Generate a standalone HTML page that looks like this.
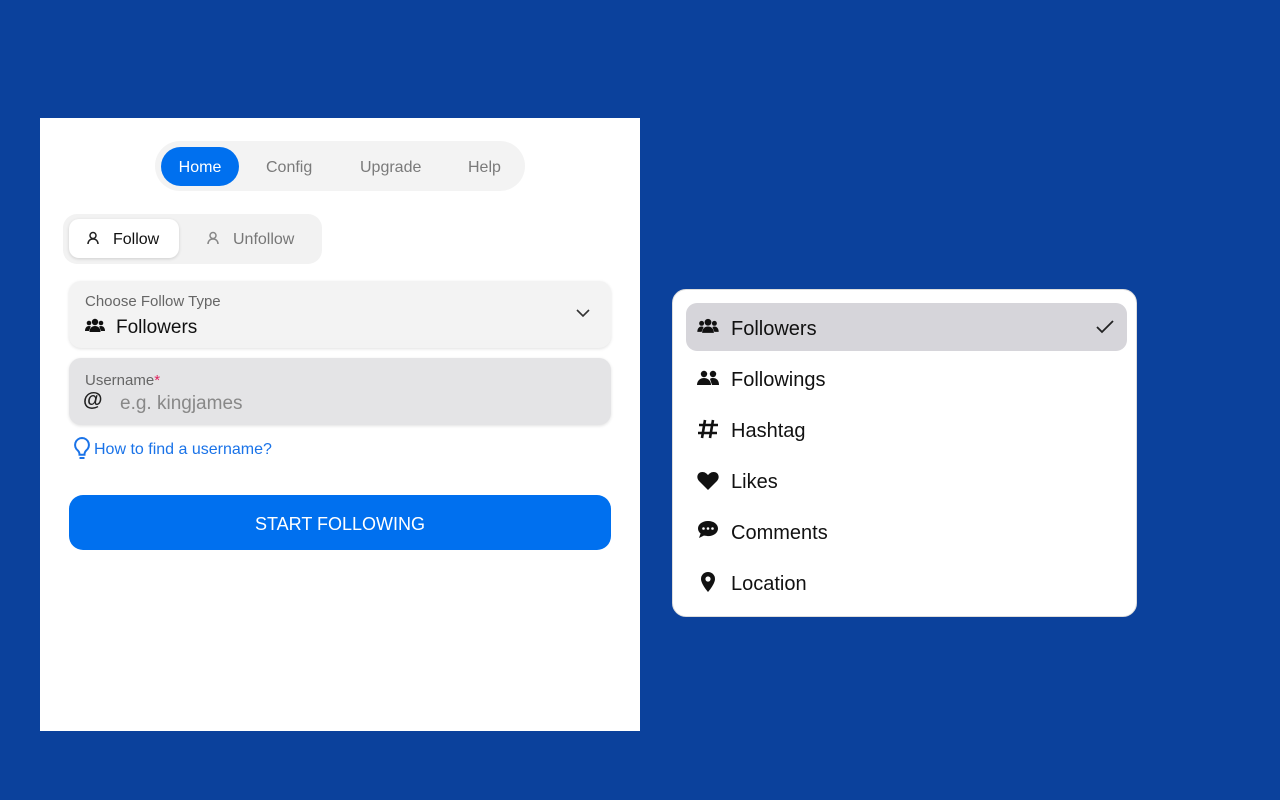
<!DOCTYPE html><html><head><style>
*{box-sizing:border-box;margin:0;padding:0}
body{width:1280px;height:800px;background:#0b419c;font-family:"Liberation Sans",sans-serif;position:relative;overflow:hidden}
.a{position:absolute}
.panel{left:40px;top:118px;width:600px;height:613px;background:#fff}
.nav{left:155px;top:141px;width:370px;height:50px;background:#f3f3f3;border-radius:25px}
.nav span{position:absolute;top:18px;font-size:16px;color:#7a7a7a}
.home{left:161px;top:147px;width:78px;height:39px;background:#0070ef;border-radius:20px;color:#fff;font-size:16px;text-align:center;line-height:41px}
.tabs{left:63px;top:214px;width:259px;height:50px;background:#f2f2f2;border-radius:14px}
.fol{left:69px;top:219px;width:110px;height:39px;background:#fff;border-radius:10px;box-shadow:0 1px 3px rgba(0,0,0,.15)}
.field{left:69px;width:542px;border-radius:12px;box-shadow:0 1px 3px rgba(0,0,0,.12)}
.dd{left:672px;top:289px;width:465px;height:328px;background:#fff;border-radius:14px;border:1px solid #ddd}
.item{position:absolute;left:686px;width:441px;height:48px;font-size:20px;color:#111}
.item svg{position:absolute;left:11px;top:14px}
.item span{position:absolute;left:45px;top:15px}
</style></head><body>
<div class="a panel"></div>
<div class="a nav"><span style="left:111px">Config</span><span style="left:205px">Upgrade</span><span style="left:313px">Help</span></div>
<div class="a home">Home</div>
<div class="a tabs"></div>
<div class="a fol"></div>
<svg class="a" style="left:87px;top:231px" width="14" height="14" viewBox="0 0 14 14" fill="none" stroke="#222" stroke-width="1.5"><circle cx="6" cy="4.5" r="3"/><path d="M1 13c0-3 2-5 5-5s5 2 5 5"/></svg>
<div class="a" style="left:113px;top:231px;font-size:16px;color:#111">Follow</div>
<svg class="a" style="left:207px;top:231px" width="14" height="14" viewBox="0 0 14 14" fill="none" stroke="#888" stroke-width="1.5"><circle cx="6" cy="4.5" r="3"/><path d="M1 13c0-3 2-5 5-5s5 2 5 5"/></svg>
<div class="a" style="left:233px;top:231px;font-size:16px;color:#777">Unfollow</div>
<div class="a field" style="top:281px;height:67px;background:#f3f3f3"></div>
<div class="a" style="left:85px;top:293px;font-size:15px;color:#666">Choose Follow Type</div>
<svg class="a" style="left:85px;top:318px" width="20" height="15" viewBox="0 0 20 15" fill="#111"><circle cx="10" cy="4" r="3.2"/><circle cx="4" cy="5" r="2.3"/><circle cx="16" cy="5" r="2.3"/><path d="M4.5 14c0-4 2.5-6 5.5-6s5.5 2 5.5 6z"/><path d="M0 13c0-3 1.5-5 4-5 1 0 1.8.5 1.8.5L4 13z"/><path d="M20 13c0-3-1.5-5-4-5-1 0-1.8.5-1.8.5L16 13z"/></svg>
<div class="a" style="left:116px;top:317px;font-size:19px;color:#111">Followers</div>
<svg class="a" style="left:576px;top:308px" width="14" height="10" viewBox="0 0 14 10" fill="none" stroke="#333" stroke-width="1.6"><path d="M1 2l6 6 6-6"/></svg>
<div class="a field" style="top:358px;height:67px;background:#e4e4e6"></div>
<div class="a" style="left:85px;top:372px;font-size:15px;color:#666">Username<span style="color:#e0245e">*</span></div>
<div class="a" style="left:83px;top:389px;font-size:20px;font-weight:bold;color:#222">@</div>
<div class="a" style="left:120px;top:393px;font-size:19px;color:#888">e.g. kingjames</div>
<svg class="a" style="left:72px;top:436px" width="20" height="26" viewBox="0 0 20 26" fill="none" stroke="#1a73e8" stroke-width="2"><path d="M10 2a7 7 0 0 0-4 12.7c1 1 1.5 2.3 1.5 4h5c0-1.7.5-3 1.5-4A7 7 0 0 0 10 2z"/><path d="M7.5 22h5"/></svg>
<div class="a" style="left:94px;top:441px;font-size:16px;color:#1a73e8">How to find a username?</div>
<div class="a" style="left:69px;top:495px;width:542px;height:55px;background:#0070ef;border-radius:14px;color:#fff;font-size:18px;text-align:center;line-height:58px">START FOLLOWING</div>

<div class="a dd"></div>
<div class="item" style="top:303px;background:#d6d5da;border-radius:11px"><svg width="22" height="16" viewBox="0 0 20 15" fill="#111" style="top:15px"><circle cx="10" cy="4" r="3.2"/><circle cx="4" cy="5" r="2.3"/><circle cx="16" cy="5" r="2.3"/><path d="M4.5 14c0-4 2.5-6 5.5-6s5.5 2 5.5 6z"/><path d="M0 13c0-3 1.5-5 4-5 1 0 1.8.5 1.8.5L4 13z"/><path d="M20 13c0-3-1.5-5-4-5-1 0-1.8.5-1.8.5L16 13z"/></svg><span>Followers</span><svg width="18" height="14" viewBox="0 0 18 14" fill="none" stroke="#222" stroke-width="1.8" style="left:410px;top:17px"><path d="M1 7l5 5L17 1"/></svg></div>
<div class="item" style="top:354px"><svg width="22" height="16" viewBox="0 0 22 16" fill="#111" style="top:16px"><circle cx="7" cy="4" r="3.2"/><circle cx="16" cy="4" r="3.2"/><path d="M0 15c0-4 3-7 7-7s7 3 7 7z"/><path d="M13 9c1-1 2-1 3-1 4 0 6 3 6 7h-7z"/></svg><span>Followings</span></div>
<div class="item" style="top:405px"><svg width="22" height="20" viewBox="0 0 22 20" fill="none" stroke="#111" stroke-width="2.6" style="top:14px"><path d="M8 1L5 19M16 1l-3 18M2 6h19M1 14h19"/></svg><span>Hashtag</span></div>
<div class="item" style="top:456px"><svg width="22" height="19" viewBox="0 0 22 19" fill="#111" style="top:15px"><path d="M11 19L2 10C-1 7 0 1 5.5 1c2.5 0 4 1.5 5.5 3 1.5-1.5 3-3 5.5-3C22 1 23 7 20 10z"/></svg><span>Likes</span></div>
<div class="item" style="top:507px"><svg width="22" height="20" viewBox="0 0 22 20" fill="#111" style="top:13px"><path d="M11 1C5 1 1 4.5 1 8.5c0 2 1 3.8 2.6 5L2 18l5-2.5c1.2.4 2.6.6 4 .6 6 0 10-3.5 10-7.6S17 1 11 1z"/><circle cx="6.5" cy="8.5" r="1.3" fill="#fff"/><circle cx="11" cy="8.5" r="1.3" fill="#fff"/><circle cx="15.5" cy="8.5" r="1.3" fill="#fff"/></svg><span>Comments</span></div>
<div class="item" style="top:558px"><svg width="22" height="22" viewBox="0 0 22 22" fill="#111" style="top:13px"><path d="M11 1a7 7 0 0 0-7 7c0 5 7 13 7 13s7-8 7-13a7 7 0 0 0-7-7z"/><circle cx="11" cy="8" r="2.6" fill="#fff"/></svg><span>Location</span></div>
</body></html>
